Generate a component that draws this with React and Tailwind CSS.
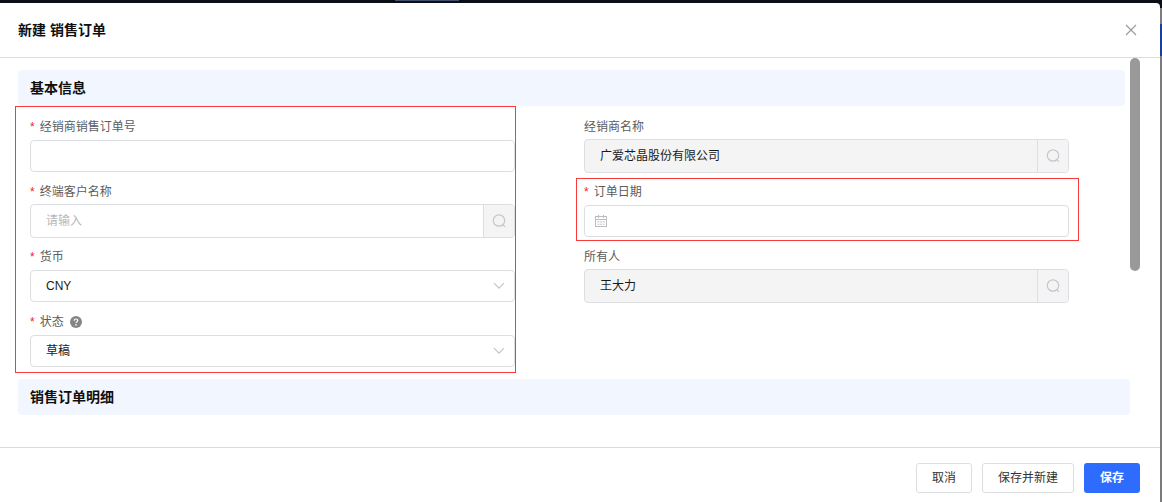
import React, { useState } from "react";

const SearchIcon = () => (
  <svg width="14" height="14" viewBox="0 0 14 14" fill="none" stroke="#c4c7cf" strokeWidth="1.2">
    <circle cx="7" cy="6.5" r="5.7" />
    <path d="M10.4 10.2L13 12.8" />
  </svg>
);

const CalendarIcon = () => (
  <svg width="12" height="12" viewBox="0 0 12 12" fill="none" stroke="#bbbdc2">
    <rect x="0.5" y="1.5" width="11" height="10" />
    <path d="M0.5 4.5H11.5M3.5 0V3M8.5 0V3" />
    <path d="M2.5 6.8H9.5M2.5 9.2H9.5" strokeDasharray="1.8 0.8" />
  </svg>
);

const ChevronIcon = () => (
  <svg width="12" height="8" viewBox="0 0 12 8" fill="none" stroke="#c0c4cc" strokeWidth="1.2">
    <path d="M1 1.2L6 6.2L11 1.2" />
  </svg>
);

const HelpIcon = () => (
  <svg width="12" height="12" viewBox="0 0 12 12">
    <circle cx="6" cy="6" r="6" fill="#868686" />
    <path
      d="M4.2 4.7C4.2 3.6 5 3 6 3S7.8 3.6 7.8 4.6C7.8 5.7 6 5.8 6 7.1"
      fill="none"
      stroke="#fff"
      strokeWidth="1.2"
    />
    <circle cx="6" cy="8.9" r="0.8" fill="#fff" />
  </svg>
);

const Field = ({ id, label, required, help, children }) => (
  <div className="flex flex-col gap-px">
    <div className="flex h-[22px] items-center">
      <label htmlFor={id} className="flex items-center text-xs text-[#5c5c5c]">
        {required && <span className="mr-[5px] text-[#f5222d]">*</span>}
        {label}
      </label>
      {help && (
        <span className="ml-1.5">
          <HelpIcon />
        </span>
      )}
    </div>
    <div className="flex h-[34px] items-center">{children}</div>
  </div>
);

const SearchField = ({ id, value, placeholder, disabled }) => (
  <div
    className={`flex h-[34px] w-full overflow-hidden rounded border border-[#dcdee2] ${
      disabled ? "bg-[#f4f4f4]" : "bg-white"
    }`}
  >
    <input
      id={id}
      type="text"
      defaultValue={value}
      placeholder={placeholder}
      disabled={disabled}
      className="min-w-0 flex-1 px-[15px] text-xs text-[#1a1a1a] outline-none placeholder:text-[#b8b8b8]"
    />
    <button
      type="button"
      aria-label="搜索"
      className="flex w-[31px] items-center justify-center border-l border-[#dcdee2] bg-[#f4f4f4]"
    >
      <SearchIcon />
    </button>
  </div>
);

const SelectField = ({ id, options }) => {
  const [value, setValue] = useState(options[0]);

  return (
    <div className="relative w-full">
      <select
        id={id}
        value={value}
        onChange={(e) => setValue(e.target.value)}
        className="h-8 w-full appearance-none rounded border border-[#dcdee2] bg-white px-[15px] text-xs text-[#1a1a1a] outline-none"
      >
        {options.map((option) => (
          <option key={option}>{option}</option>
        ))}
      </select>
      <span className="pointer-events-none absolute inset-y-0 right-2.5 flex items-center">
        <ChevronIcon />
      </span>
    </div>
  );
};

const App = () => {
  return (
    <div className="flex min-h-screen flex-col bg-[#0b0d17] font-['Liberation_Sans','Noto_Sans_CJK_SC',sans-serif]">
      {/* Page behind the dialog */}
      <div className="flex h-[3px] items-start">
        <div className="w-[34%]"></div>
        <div className="h-px w-16 bg-[#43506f]"></div>
      </div>

      <div className="flex flex-1">
        <div role="dialog" aria-labelledby="dialog-title" className="flex min-w-0 flex-1 flex-col rounded-tr-sm bg-white">
          <header className="flex h-[55px] items-center justify-between border-b border-[#dcdcdc] pr-[23px] pl-[18px]">
            <h1 id="dialog-title" className="text-sm font-bold text-[#0f0f0f]">
              新建 销售订单
            </h1>
            <button type="button" aria-label="关闭">
              <svg width="12" height="12" viewBox="0 0 12 12" stroke="#999" strokeWidth="1.1">
                <path d="M1 1L11 11M11 1L1 11" />
              </svg>
            </button>
          </header>

          <div className="flex flex-1 items-start pr-5 pl-[18px]">
            <main className="min-w-0 flex-1 pt-3">
              <h2 className="mr-[5px] flex h-9 items-center rounded bg-[#f2f6ff] px-3 text-sm font-bold text-[#0f0f0f]">
                基本信息
              </h2>

              <form className="grid grid-cols-2 gap-x-[69px] pr-[61px] pl-3">
                <div className="relative flex flex-col gap-2 pt-2.5 pb-[5px]">
                  <Field id="orderNo" label="经销商销售订单号" required>
                    <input
                      id="orderNo"
                      type="text"
                      className="h-8 w-full rounded border border-[#dcdee2] px-[15px] text-xs text-[#1a1a1a] outline-none"
                    />
                  </Field>
                  <Field id="customer" label="终端客户名称" required>
                    <SearchField id="customer" placeholder="请输入" />
                  </Field>
                  <Field id="currency" label="货币" required>
                    <SelectField id="currency" options={["CNY"]} />
                  </Field>
                  <Field id="status" label="状态" required help>
                    <SelectField id="status" options={["草稿"]} />
                  </Field>
                  <div className="pointer-events-none absolute inset-y-0 -right-px -left-[15px] border border-[#f93a3a]"></div>
                </div>

                <div className="flex flex-col gap-2 pt-2.5">
                  <Field id="dealer" label="经销商名称">
                    <SearchField id="dealer" value="广爱芯晶股份有限公司" disabled />
                  </Field>
                  <div className="relative">
                    <Field id="orderDate" label="订单日期" required>
                      <div className="flex h-8 w-full items-center rounded border border-[#dcdee2] px-2.5">
                        <CalendarIcon />
                        <input id="orderDate" type="text" className="ml-2 min-w-0 flex-1 text-xs outline-none" />
                      </div>
                    </Field>
                    <div className="pointer-events-none absolute -top-[3px] -right-2.5 -bottom-[3px] -left-2 border border-[#f93a3a]"></div>
                  </div>
                  <Field id="owner" label="所有人">
                    <SearchField id="owner" value="王大力" disabled />
                  </Field>
                </div>
              </form>

              <h2 className="mt-1.5 flex h-9 items-center rounded bg-[#f2f6ff] px-3 text-sm font-bold text-[#0f0f0f]">
                销售订单明细
              </h2>
            </main>
            <div className="h-[213px] w-2.5 rounded-full bg-[#999]"></div>
          </div>

          <footer className="flex h-[55px] items-start justify-end gap-2.5 border-t border-[#dcdcdc] px-5 pt-[15px]">
            <button type="button" className="h-[30px] rounded-[3px] border border-[#dcdee2] px-[15px] text-xs text-[#333]">
              取消
            </button>
            <button type="button" className="h-[30px] rounded-[3px] border border-[#dcdee2] px-[15px] text-xs text-[#333]">
              保存并新建
            </button>
            <button type="button" className="h-[30px] rounded-[3px] bg-[#2e6bff] px-4 text-xs font-bold text-white">
              保存
            </button>
          </footer>
        </div>

        <div className="flex w-0.5 flex-col pt-[5px]">
          <div className="h-4 bg-[#7d7d7d]"></div>
          <div className="h-8 bg-[#17409c]"></div>
          <div className="flex-1 bg-[#7b7b7b]"></div>
        </div>
      </div>
    </div>
  );
};

export default App;
